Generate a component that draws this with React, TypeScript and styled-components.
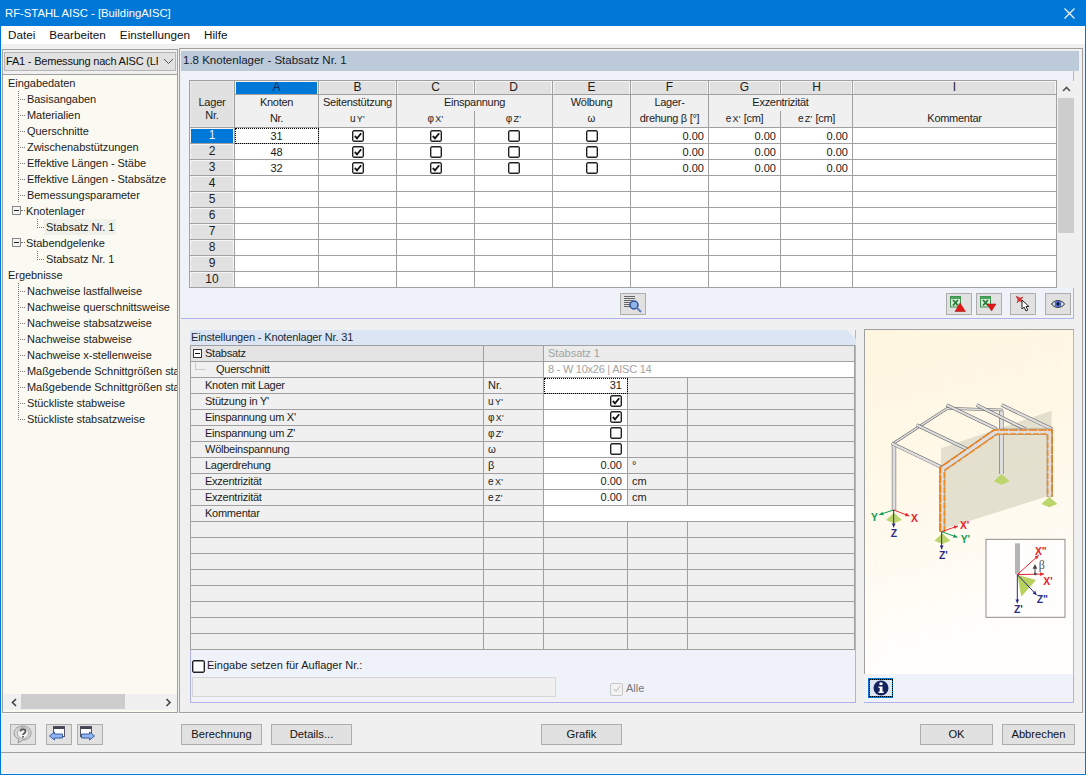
import React from "react";
import styled, { createGlobalStyle } from "styled-components";

const Global = createGlobalStyle`
  html, body { margin: 0; padding: 0; background: #f0f0f0; overflow: hidden; }
  * { box-sizing: border-box; }
`;

const LINE = "#a0a0a0";
const PURPLE = "#b0b0ea";
const PANEL = "#eff3f9";

const Win = styled.div`
  width: 1086px; height: 775px; display: flex; flex-direction: column;
  border: 1px solid #0078d7; border-top: 0; background: #f0f0f0;
  font: 11px/15px "Liberation Sans", Arial, sans-serif; color: #1c1c1c; overflow: hidden;
`;
const TitleBar = styled.div`
  height: 26px; flex: none; background: #0078d7; color: #fff; display: flex; align-items: center;
  justify-content: space-between; padding: 0 10px 0 4px; font-size: 11.3px;
`;
const MenuBar = styled.div`
  height: 18px; flex: none; background: #fff; display: flex; gap: 14px; padding-left: 7px;
  font-size: 11.7px; line-height: 18px; color: #111;
`;
const Workspace = styled.div`
  height: 665px; flex: none; margin-top: 4px; display: flex; align-items: flex-start; padding-left: 1px;
`;
const Sidebar = styled.aside`
  width: 176px; height: 664px; margin-top: 1px; border: 1px solid ${LINE}; display: flex; flex-direction: column;
  padding-top: 2px; overflow: hidden;
`;
const Combo = styled.div`
  height: 19px; margin: 0 0 0 1px; width: 172px; flex: none; background: #e1e1e1; border: 1px solid #b4b4b4;
  display: flex; align-items: center; padding-left: 1px; font-size: 11px; color: #111; letter-spacing: -.2px;
`;
const ComboText = styled.span`width: 152px; overflow: hidden; white-space: nowrap; flex: none;`;
const ComboArrow = styled.span`display: flex; margin-left: 5px;`;
const Tree = styled.div`
  flex: 1; margin-top: 3px; border-top: 1px solid ${LINE}; background: #fbfaf2; display: flex; flex-direction: column;
  min-height: 0;
`;
const TreeBody = styled.div`flex: 1; overflow: hidden; padding-top: 0; letter-spacing: -.05px;`;
const TreeRow = styled.div<{ $top?: boolean }>`
  height: 16px; display: flex; align-items: stretch; white-space: nowrap; padding-left: ${p => (p.$top ? 5 : 0)}px;
  line-height: 16px;
`;
const Connector = styled.span<{ $left: number; $width: number; $last?: boolean; $noVert?: boolean }>`
  position: relative; flex: none; margin-left: ${p => p.$left}px; width: ${p => p.$width}px;
  &::before {
    content: ""; position: absolute; left: 0; top: 0; width: 1px; height: ${p => (p.$noVert ? 0 : p.$last ? "50%" : "100%")};
    background: repeating-linear-gradient(180deg, #777 0 1px, transparent 1px 2px);
  }
  &::after {
    content: ""; position: absolute; left: 0; top: 8px; right: 1px; height: 1px;
    background: repeating-linear-gradient(90deg, #777 0 1px, transparent 1px 2px);
  }
`;
const Expander = styled.span`
  flex: none; width: 9px; height: 9px; margin: 3px 0 0 9px; border: 1px solid #888; background: #f4f4f4;
  display: flex; align-items: center; justify-content: center;
  &::after { content: ""; width: 5px; height: 1px; background: #222; }
`;
const ExpanderTail = styled.span`
  flex: none; width: 4px; height: 8px; border-bottom: 1px dotted #777; margin-right: 1px;
`;
const TreeLabel = styled.span<{ $selected?: boolean }>`
  flex: none; background: ${p => (p.$selected ? "#f1f1ec" : "transparent")};
  padding: 0 ${p => (p.$selected ? 2 : 0)}px; margin-left: ${p => (p.$selected ? -2 : 0)}px;
`;
const HScroll = styled.div`
  height: 16px; flex: none; background: #f0f0f0; margin: 0 0 2px 0; display: flex; align-items: center; justify-content: space-between; padding: 0 4px 0 7px; position: relative;
`;
const HThumb = styled.span`
  position: absolute; left: 18px; top: 0; width: 104px; height: 15px; background: #cdcdcd;
`;
const Main = styled.main`
  width: 904px; height: 665px; margin-left: 1px; border: 1px solid ${LINE}; padding: 2px 0 0 1px; overflow: hidden;
`;
const SectionTitle = styled.div`
  width: 898px; height: 20px; background: #bccad9; font-size: 11.5px; line-height: 19px; padding-left: 2px; color: #14202c;
`;
const UpperPanel = styled.section`
  width: 893px; height: 248px; background: ${PANEL}; border-right: 1px solid ${PURPLE}; border-bottom: 1px solid ${PURPLE};
  padding: 9px 0 0 8px;
`;
const TableWrap = styled.div`display: flex; height: 208px;`;
const Table = styled.table`
  width: 868px; table-layout: fixed; border-collapse: separate; border-spacing: 0; background: #fff;
  border-top: 1px solid ${LINE}; border-left: 1px solid ${LINE}; font: inherit; flex: none; height: 208px;
`;
const Corner = styled.th`
  background: #e1e1e1; border-right: 1px solid ${LINE}; border-bottom: 1px solid ${LINE}; font-weight: 400; padding: 10px 0 0; line-height: 13px;
  letter-spacing: -.2px; box-shadow: inset 0 0 0 1px #e9e9e9;
`;
const LetterCell = styled.th<{ $active?: boolean }>`
  height: 14px; padding: 0; font-weight: 400; font-size: 12px; line-height: 13px; text-align: center;
  background: ${p => (p.$active ? "#0078d7" : "#e1e1e1")}; color: ${p => (p.$active ? "#06305c" : "#1c1c1c")};
  border-right: 1px solid ${LINE}; border-bottom: 1px solid ${LINE};
  box-shadow: inset 1px 1px 0 #f4f4f4, inset -1px 0 0 #f4f4f4;
`;
const HeadCell = styled.th<{ $h: number; $line?: boolean; $big?: boolean }>`
  height: ${p => p.$h}px; padding: 0 0 1px; font-weight: 400; background: #f0f0f0; text-align: center; line-height: 15px; letter-spacing: -.28px;
  border-right: 1px solid ${LINE}; border-bottom: ${p => (p.$line ? `1px solid ${LINE}` : "0")}; white-space: nowrap;
`;
const RowHead = styled.th<{ $active?: boolean }>`
  height: 16px; padding: 0; font-weight: 400; font-size: 12px; line-height: 13px; text-align: center;
  background: ${p => (p.$active ? "#0078d7" : "#e1e1e1")}; color: ${p => (p.$active ? "#e6f0fa" : "#1c1c1c")};
  border-right: 1px solid ${LINE}; border-bottom: 1px solid ${LINE};
  box-shadow: inset 1px 1px 0 #f6f6f6, inset -1px 0 0 #f6f6f6;
`;
const Cell = styled.td<{ $align?: string; $focus?: boolean }>`
  height: 16px; padding: 1px ${p => (p.$align === "right" ? 4 : 0)}px 0 0; text-align: ${p => p.$align || "center"};
  border-right: 1px solid ${LINE}; border-bottom: 1px solid ${LINE}; background: #fff; line-height: 14px; color: #1a1a1a;
  ${p => (p.$focus ? "outline: 1px dotted #000; outline-offset: -1px;" : "")}
`;
const Box = styled.span<{ $disabled?: boolean; $size: number }>`
  display: inline-flex; width: ${p => p.$size}px; height: ${p => p.$size}px; align-items: center; justify-content: center; vertical-align: top; margin-top: 1px;
  border: 1px solid ${p => (p.$disabled ? "#c8c8c8" : "#222")}; border-radius: 2px; background: ${p => (p.$disabled ? "#f2f2f2" : "#fff")}; flex: none;
  box-shadow: ${p => (p.$disabled ? "none" : "inset 0 0 0 .4px #222")};
`;
const Sub = styled.span`font-size: 9px; margin-left: 1px; line-height: 1;`;
const Sym = styled.span`font-size: 10px; letter-spacing: .3px; line-height: 1;`;
const VScroll = styled.div`
  width: 17px; flex: none; margin-top: 1px; background: #f0f0f0; display: flex; flex-direction: column; align-items: center; padding-left: 1px;
`;
const VArrow = styled.div`height: 17px; flex: none; display: flex; align-items: center; justify-content: center;`;
const VTrack = styled.div`flex: 1; width: 100%; padding-bottom: 54px;`;
const VThumb = styled.div`width: 100%; height: 135px; background: #cdcdcd;`;
const Toolbar = styled.div`display: flex; margin-top: 5px; padding: 0 2px 0 431px;`;
const ToolButton = styled.button<{ $ml?: number; $auto?: boolean }>`
  width: 26px; height: 22px; padding: 0; background: #e1e1e1; border: 1px solid #adadad; display: flex; align-items: center; justify-content: center;
  margin-left: ${p => (p.$auto ? "auto" : `${p.$ml ?? 0}px`)}; flex: none;
`;
const Lower = styled.div`display: flex; align-items: flex-start; margin-top: 11px; padding-left: 9px;`;
const SettingsPanel = styled.section`width: 666px; height: 373px; border-right: 1px solid ${PURPLE}; border-bottom: 1px solid ${PURPLE}; display: flex; flex-direction: column;`;
const SettingsTitle = styled.div`
  height: 15px; flex: none; background: #dbe5f3; line-height: 14px; padding-left: 1px; color: #1c2833; margin-right: -1px; letter-spacing: -.16px;
  clip-path: polygon(0 0, calc(100% - 9px) 0, 100% 9px, 100% 100%, 0 100%);
`;
const PropTable = styled.table`
  width: 665px; table-layout: fixed; border-collapse: separate; border-spacing: 0; border-top: 1px solid ${LINE}; border-left: 1px solid ${LINE};
  font: inherit; flex: none; background: #f0f0f0;
`;
const PropCell = styled.td<{ $bg?: string; $align?: string; $gray?: boolean; $focus?: boolean; $pad?: number; $tight?: boolean }>`
  height: 16px; padding: 0 ${p => (p.$align === "right" ? 5 : 2)}px 0 ${p => p.$pad ?? 4}px; line-height: 15px; white-space: nowrap; overflow: hidden;
  background: ${p => p.$bg || "#f0f0f0"}; text-align: ${p => p.$align || "left"}; color: ${p => (p.$gray ? "#a3a3a3" : "#1c1c1c")};
  border-right: 1px solid ${LINE}; border-bottom: 1px solid ${LINE}; letter-spacing: ${p => (p.$tight ? "-.25px" : "0")};
  ${p => (p.$focus ? "outline: 1px dotted #000; outline-offset: -1px;" : "")}
`;
const LabelCollapse = styled.span`
  display: inline-block; width: 9px; height: 9px; border: 1px solid #333; background: #fff; position: relative; top: 0; margin-right: 3px; vertical-align: -1px;
  &::after { content: ""; position: absolute; left: 1px; top: 3px; width: 5px; height: 1px; background: #111; }
`;
const Elbow = styled.span`
  display: inline-block; width: 11px; height: 8px; margin: 0 10px 0 4px; border-left: 1px solid #ccc; border-bottom: 1px solid #ccc; vertical-align: 3px;
`;
const SettingsFooter = styled.div`
  flex: 1; background: ${PANEL}; border-left: 1px solid ${PURPLE}; padding: 9px 0 0 1px; display: flex; flex-direction: column;
`;
const CheckLine = styled.label`display: flex; align-items: center; gap: 2px; height: 13px; color: #1a1a1a;`;
const InputLine = styled.div`display: flex; align-items: center; margin-top: 5px;`;
const DisabledInput = styled.div`width: 364px; height: 20px; background: #f0f0f0; border: 1px solid #d4d4d4;`;
const AllLabel = styled.label`display: flex; align-items: center; gap: 3px; margin-left: 54px; color: #777; padding-top: 3px;`;
const PicturePanel = styled.section`width: 210px; height: 374px; margin: -1px 0 0 8px; display: flex; flex-direction: column;`;
const Picture = styled.div`
  height: 345px; flex: none; border-top: 1px solid ${LINE}; border-left: 1px solid ${LINE}; border-right: 1px solid ${PURPLE}; overflow: hidden;
  background: linear-gradient(165deg, #fff6e0 0%, #fff9ea 45%, #fffefc 85%);
  svg { display: block; }
`;
const InfoBar = styled.div`
  flex: 1; background: ${PANEL}; border-right: 1px solid ${PURPLE}; border-bottom: 1px solid ${PURPLE}; padding: 4px 0 0 4px;
`;
const InfoButton = styled.button`
  width: 25px; height: 20px; padding: 0; background: #0078d7; border: 0; display: flex; align-items: center; justify-content: center;
  span { display: flex; outline: 1px dotted #000; background: #dde6f2; padding: 0 3px; }
`;
const ButtonBar = styled.footer`
  height: 40px; flex: none; margin-top: 0; border-top: 1px solid #f8f8f8; border-bottom: 1px solid ${LINE}; padding: 10px 9px 0 0; display: flex; align-items: flex-start;
`;
const Btn = styled.button<{ $ml: number; $w: number }>`
  width: ${p => p.$w}px; height: 21px; margin-left: ${p => p.$ml}px; padding: 0; background: #e1e1e1; border: 1px solid #adadad;
  font: inherit; font-size: 11.2px; color: #111; flex: none;
`;
const IconBtn = styled(Btn)`display: flex; align-items: center; justify-content: center;`;
const StatusBar = styled.div`flex: 1; background: #f0f0f0; border-bottom: 1px solid #fafafa;`;

const Chev: React.FC<{ d: "up" | "down" | "left" | "right"; c?: string }> = ({ d, c = "#555" }) => {
  const p = { up: "1,6 4.5,2.5 8,6", down: "1,2.5 4.5,6 8,2.5", left: "6,1 2.5,4.5 6,8", right: "2.5,1 6,4.5 2.5,8" }[d];
  return <svg width="9" height="9" viewBox="0 0 9 9"><polyline points={p} fill="none" stroke={c} strokeWidth="1.6" /></svg>;
};
const Check: React.FC<{ on?: boolean; disabled?: boolean; size?: number }> = ({ on, disabled, size = 12 }) => (
  <Box $disabled={disabled} $size={size}>
    {on && (
      <svg width="10" height="10" viewBox="0 0 11 11">
        <polyline points="2,5.5 4.4,8 9,2.5" fill="none" stroke={disabled ? "#b0b0b0" : "#111"} strokeWidth={disabled ? 1 : 2} />
      </svg>
    )}
  </Box>
);

const ExcelIcon: React.FC<{ down?: boolean }> = ({ down }) => (
  <svg width="22" height="18" viewBox="0 0 22 18">
    <rect x="2.500" y="1.500" width="10" height="10.500" fill="#d4ead4" stroke="#3f9350" />
    <rect x="3" y="2" width="9" height="2" fill="#4aa45a" />
    <path d="M5 5l5 5.500M10 5l-5 5.500" stroke="#2a7a3a" strokeWidth="1.800" />
    {down
      ? <polygon points="9,9 18,9 13.500,16" fill="#e01818" stroke="#a01010" strokeWidth=".5" />
      : <polygon points="12,8 17.500,16.500 7,16.500" fill="#e01818" stroke="#a01010" strokeWidth=".5" />}
  </svg>
);
const SearchListIcon = () => (
  <svg width="20" height="18" viewBox="0 0 20 18">
    <path d="M1 1.500h11M1 3.500h11M1 5.500h9M1 7.500h7M1 9.500h7M1 11.500h8" stroke="#666" />
    <circle cx="11" cy="10" r="4" fill="#8eb4e8" stroke="#2f4f9a" strokeWidth="1.500" />
    <path d="M14 13l4 4" stroke="#5e7fc0" strokeWidth="2.200" />
  </svg>
);
const PinIcon = () => (
  <svg width="20" height="20" viewBox="0 0 20 20">
    <path d="M3 2l4 2 3-1-2 3 1 2-3-1-2 2 1-3z" fill="#d83a3a" stroke="#b02828" strokeWidth=".5" />
    <path d="M9 6v9l2.200-1.800 1.800 3.800 1.800-1-1.800-3.500h3z" fill="#fff" stroke="#222" />
  </svg>
);
const EyeIcon = () => (
  <svg width="14" height="10" viewBox="0 0 14 10">
    <path d="M.5 5c3-4.500 10-4.500 13 0-3 4.500-10 4.500-13 0z" fill="#dfe6f5" stroke="#222" />
    <circle cx="7" cy="5" r="3.300" fill="#4a68c8" />
    <circle cx="7" cy="5" r="1.400" fill="#111" />
  </svg>
);
const HelpIcon = () => (
  <svg width="20" height="19" viewBox="0 0 20 19">
    <path d="M10 1c5 0 8 3 8 7s-3 7-8 7l-5 3 1-4c-3-1-5-3-5-6 0-4 4-7 9-7z" fill="#d6d6d6" stroke="#999" />
    <circle cx="10" cy="8" r="5.500" fill="#f4f4f4" stroke="#aaa" />
    <path d="M7.500 6.500c0-3 5-3 5 0 0 2-2.500 2-2.500 3.500M10 11v1.600" fill="none" stroke="#5a5a5a" strokeWidth="1.800" />
  </svg>
);
const NavIcon: React.FC<{ next?: boolean }> = ({ next }) => (
  <svg width="22" height="19" viewBox="0 0 22 19">
    <rect x={next ? 1.5 : 5.5} y="1.500" width="11" height="10" fill="#fff" stroke="#556" />
    <rect x={next ? 1.5 : 5.5} y="1.500" width="11" height="2.500" fill="#445" />
    <polygon
      points={next ? "15.500,11 10.500,7 10.500,9 2.500,9 2.500,13 10.500,13 10.500,15" : "1.500,11 6.500,7 6.500,9 14.500,9 14.500,13 6.500,13 6.500,15"}
      fill="#8fb4f0" stroke="#2b4fa0" strokeWidth=".9"
    />
  </svg>
);
const InfoIcon = () => (
  <svg width="16" height="16" viewBox="0 0 16 16">
    <circle cx="8" cy="8" r="7.500" fill="#14235e" />
    <rect x="6.500" y="2.500" width="3" height="2.500" fill="#fff" />
    <path d="M5.500 6.500h4V11.500h1.200v1.500H5.500v-1.500h1.200V8H5.500z" fill="#fff" />
  </svg>
);

const Beam: React.FC<{ d: string; w?: number }> = ({ d, w = 10 }) => (
  <g fill="none">
    <path d={d} stroke="#5c5c5c" strokeWidth={w} />
    <path d={d} stroke="#dedede" strokeWidth={w - 3} />
  </g>
);
const Support: React.FC<{ x: number; y: number }> = ({ x, y }) => (
  <polygon points={`${x},${y} ${x + 24},${y + 22} ${x},${y + 32} ${x - 24},${y + 22}`} fill="#bcd56c" />
);
const Arrow: React.FC<{ x1: number; y1: number; x2: number; y2: number; c: string }> = ({ x1, y1, x2, y2, c }) => {
  const a = Math.atan2(y2 - y1, x2 - x1);
  const s = 13, t = 0.45;
  const p1 = `${x2 - s * Math.cos(a - t)},${y2 - s * Math.sin(a - t)}`;
  const p2 = `${x2 - s * Math.cos(a + t)},${y2 - s * Math.sin(a + t)}`;
  return (
    <g>
      <line x1={x1} y1={y1} x2={x2} y2={y2} stroke={c} strokeWidth="3" />
      <polygon points={`${x2},${y2} ${p1} ${p2}`} fill={c} />
    </g>
  );
};
const AxisLabel = styled.text<{ $c: string }>`
  font: 700 31px "Liberation Sans", Arial, sans-serif; fill: ${p => p.$c};
`;
const RED = "#e8202a", GREEN = "#0e9a50", NAVY = "#2b2a86";

const FrameDrawing = () => (
  <svg width="208" height="344" viewBox="0 0 208 344">
    <g transform="translate(-5 50) scale(.3333)">
      <polygon points="243,205 575,92 575,345 243,450" fill="#d9d6c4" opacity=".72" />
      <Support x={425} y={282} />
      <Support x={568} y={350} />
      <Support x={102} y={398} />
      <Support x={247} y={460} />
      <Beam d="M424 92V282" w={13} />
      <Beam d="M102 192V392" w={13} />
      <Beam d="M100 190L262 85L428 90" w={8} />
      <Beam d="M95 190L245 262" />
      <Beam d="M170 135L320 207" />
      <Beam d="M260 75L410 147" />
      <Beam d="M350 75L497 148" />
      <Beam d="M425 75L578 148" />
      <Beam d="M247 455V266L407 155H569V350" w={17} />
      <path d="M241 455V262L402 150H576V350" fill="none" stroke="#ee7d11" strokeWidth="5" strokeDasharray="26 3" />
      <path d="M253 455V272L412 162H563V350" fill="none" stroke="#f08a22" strokeWidth="5" strokeDasharray="18 5" />
      <Arrow x1={101} y1={390} x2={148} y2={408} c={RED} />
      <Arrow x1={101} y1={390} x2={58} y2={404} c={GREEN} />
      <Arrow x1={101} y1={390} x2={101} y2={442} c={NAVY} />
      <AxisLabel $c={RED} x="153" y="426">X</AxisLabel>
      <AxisLabel $c={GREEN} x="33" y="422">Y</AxisLabel>
      <AxisLabel $c={NAVY} x="92" y="472">Z</AxisLabel>
      <Arrow x1={245} y1={455} x2={294} y2={438} c={RED} />
      <Arrow x1={245} y1={455} x2={292} y2={472} c={GREEN} />
      <Arrow x1={245} y1={455} x2={245} y2={508} c={NAVY} />
      <AxisLabel $c={RED} x="300" y="446">X'</AxisLabel>
      <AxisLabel $c={GREEN} x="302" y="489">Y'</AxisLabel>
      <AxisLabel $c={NAVY} x="237" y="537">Z'</AxisLabel>
      <rect x="378" y="478" width="237" height="234" fill="#fffefc" stroke="#8c8c8c" strokeWidth="3" />
      <rect x="465" y="490" width="15" height="92" fill="#b4b4b4" />
      <polygon points="472,584 528,600 484,650" fill="#b8d25e" />
      <Arrow x1={472} y1={584} x2={472} y2={670} c={NAVY} />
      <Arrow x1={472} y1={584} x2={552} y2={582} c={RED} />
      <Arrow x1={472} y1={584} x2={536} y2={526} c={RED} />
      <Arrow x1={472} y1={584} x2={530} y2={645} c={NAVY} />
      <path d="M525 582V560" stroke="#444" strokeWidth="3" />
      <polygon points="525,552 518,566 532,566" fill="#444" />
      <circle cx="526" cy="582" r="4" fill="#444" />
      <AxisLabel $c={RED} x="525" y="524">X"</AxisLabel>
      <AxisLabel $c={RED} x="550" y="616">X'</AxisLabel>
      <AxisLabel $c={NAVY} x="530" y="668">Z"</AxisLabel>
      <AxisLabel $c={NAVY} x="462" y="698">Z'</AxisLabel>
      <text x="536" y="566" fontFamily="Liberation Serif, serif" fontSize="36" fill="#555">β</text>
    </g>
  </svg>
);

type TreeItem = { t: string; kind: "top" | "item" | "sub" | "expand"; last?: boolean; sel?: boolean; vert?: boolean };
const tree: TreeItem[] = [
  { t: "Eingabedaten", kind: "top" },
  { t: "Basisangaben", kind: "item" }, { t: "Materialien", kind: "item" }, { t: "Querschnitte", kind: "item" },
  { t: "Zwischenabstützungen", kind: "item" }, { t: "Effektive Längen - Stäbe", kind: "item" },
  { t: "Effektive Längen - Stabsätze", kind: "item" }, { t: "Bemessungsparameter", kind: "item" },
  { t: "Knotenlager", kind: "expand" }, { t: "Stabsatz Nr. 1", kind: "sub", sel: true },
  { t: "Stabendgelenke", kind: "expand" }, { t: "Stabsatz Nr. 1", kind: "sub" },
  { t: "Ergebnisse", kind: "top" },
  { t: "Nachweise lastfallweise", kind: "item" }, { t: "Nachweise querschnittsweise", kind: "item" },
  { t: "Nachweise stabsatzweise", kind: "item" }, { t: "Nachweise stabweise", kind: "item" },
  { t: "Nachweise x-stellenweise", kind: "item" }, { t: "Maßgebende Schnittgrößen stabsatzweise", kind: "item" },
  { t: "Maßgebende Schnittgrößen stabweise", kind: "item" }, { t: "Stückliste stabweise", kind: "item" },
  { t: "Stückliste stabsatzweise", kind: "item", last: true },
];

const widths = [45, 84, 78, 78, 78, 78, 78, 72, 72, 203];
const letters = ["A", "B", "C", "D", "E", "F", "G", "H", "I"];
const dataRows = [
  { n: 31, c: [true, true, false, false] },
  { n: 48, c: [true, false, false, false] },
  { n: 32, c: [true, true, false, false] },
];
const propWidths = [293, 60, 84, 60, 167];

type Prop = { label: string; sym?: React.ReactNode; check?: boolean; val?: string; unit?: string };
const props: Prop[] = [
  { label: "Stützung in Y'", sym: <Sym>u<Sub>Y'</Sub></Sym>, check: true },
  { label: "Einspannung um X'", sym: <Sym>φ<Sub>X'</Sub></Sym>, check: true },
  { label: "Einspannung um Z'", sym: <Sym>φ<Sub>Z'</Sub></Sym>, check: false },
  { label: "Wölbeinspannung", sym: <Sym>ω</Sym>, check: false },
  { label: "Lagerdrehung", sym: "β", val: "0.00", unit: "°" },
  { label: "Exzentrizität", sym: <Sym>e<Sub>X'</Sub></Sym>, val: "0.00", unit: "cm" },
  { label: "Exzentrizität", sym: <Sym>e<Sub>Z'</Sub></Sym>, val: "0.00", unit: "cm" },
];

export default function App() {
  return (
    <Win>
      <Global />
      <TitleBar>
        <span>RF-STAHL AISC - [BuildingAISC]</span>
        <svg width="11" height="11" viewBox="0 0 11 11"><path d="M.5.500l10 10M10.500.500l-10 10" stroke="#fff" strokeWidth="1.100" /></svg>
      </TitleBar>
      <MenuBar>
        <span>Datei</span><span>Bearbeiten</span><span>Einstellungen</span><span>Hilfe</span>
      </MenuBar>
      <Workspace>
        <Sidebar>
          <Combo>
            <ComboText>FA1 - Bemessung nach AISC (LRFD)</ComboText>
            <ComboArrow><svg width="11" height="7" viewBox="0 0 11 7"><polyline points="1,1 5.500,5.500 10,1" fill="none" stroke="#555" /></svg></ComboArrow>
          </Combo>
          <Tree>
            <TreeBody>
              {tree.map((it, i) => (
                <TreeRow key={i} $top={it.kind === "top"}>
                  {it.kind === "item" && <Connector $left={15} $width={9} $last={it.last} />}
                  {it.kind === "expand" && <><Expander /><ExpanderTail /></>}
                  {it.kind === "sub" && <Connector $left={34} $width={9} $last />}
                  <TreeLabel $selected={it.sel}>{it.t}</TreeLabel>
                </TreeRow>
              ))}
            </TreeBody>
            <HScroll>
              <Chev d="left" c="#444" />
              <HThumb />
              <Chev d="right" c="#444" />
            </HScroll>
          </Tree>
        </Sidebar>
        <Main>
          <SectionTitle>1.8 Knotenlager - Stabsatz Nr. 1</SectionTitle>
          <UpperPanel>
            <TableWrap>
              <Table>
                <colgroup>
                  {widths.map((w, i) => <col key={i} style={{ width: i === 9 ? w + 1 : w }} />)}
                </colgroup>
                <thead>
                  <tr>
                    <Corner rowSpan={3}>Lager<br />Nr.</Corner>
                    {letters.map((l, i) => <LetterCell key={l} $active={i === 0}>{l}</LetterCell>)}
                  </tr>
                  <tr>
                    <HeadCell $h={16}>Knoten</HeadCell>
                    <HeadCell $h={16}>Seitenstützung</HeadCell>
                    <HeadCell $h={16} colSpan={2}>Einspannung</HeadCell>
                    <HeadCell $h={16}>Wölbung</HeadCell>
                    <HeadCell $h={16}>Lager-</HeadCell>
                    <HeadCell $h={16} colSpan={2}>Exzentrizität</HeadCell>
                    <HeadCell $h={16} />
                  </tr>
                  <tr>
                    <HeadCell $h={17} $line>Nr.</HeadCell>
                    <HeadCell $h={17} $line><Sym>u<Sub>Y'</Sub></Sym></HeadCell>
                    <HeadCell $h={17} $line><Sym>φ<Sub>X'</Sub></Sym></HeadCell>
                    <HeadCell $h={17} $line><Sym>φ<Sub>Z'</Sub></Sym></HeadCell>
                    <HeadCell $h={17} $line><Sym>ω</Sym></HeadCell>
                    <HeadCell $h={17} $line>drehung β [°]</HeadCell>
                    <HeadCell $h={17} $line><Sym>e<Sub>X'</Sub></Sym> [cm]</HeadCell>
                    <HeadCell $h={17} $line><Sym>e<Sub>Z'</Sub></Sym> [cm]</HeadCell>
                    <HeadCell $h={17} $line>Kommentar</HeadCell>
                  </tr>
                </thead>
                <tbody>
                  {Array.from({ length: 10 }, (_, r) => {
                    const d = dataRows[r];
                    return (
                      <tr key={r}>
                        <RowHead $active={r === 0}>{r + 1}</RowHead>
                        <Cell $focus={r === 0}>{d?.n}</Cell>
                        {d
                          ? d.c.map((on, i) => <Cell key={i}><Check on={on} /></Cell>)
                          : [0, 1, 2, 3].map(i => <Cell key={i} />)}
                        {[0, 1, 2].map(i => <Cell key={i} $align="right">{d ? "0.00" : ""}</Cell>)}
                        <Cell />
                      </tr>
                    );
                  })}
                </tbody>
              </Table>
              <VScroll>
                <VArrow><Chev d="up" /></VArrow>
                <VTrack><VThumb /></VTrack>
                <VArrow><Chev d="down" /></VArrow>
              </VScroll>
            </TableWrap>
            <Toolbar>
              <ToolButton><SearchListIcon /></ToolButton>
              <ToolButton $auto><ExcelIcon /></ToolButton>
              <ToolButton $ml={4}><ExcelIcon down /></ToolButton>
              <ToolButton $ml={8}><PinIcon /></ToolButton>
              <ToolButton $ml={9}><EyeIcon /></ToolButton>
            </Toolbar>
          </UpperPanel>
          <Lower>
            <SettingsPanel>
              <SettingsTitle>Einstellungen - Knotenlager Nr. 31</SettingsTitle>
              <PropTable>
                <colgroup>{propWidths.map((w, i) => <col key={i} style={{ width: w }} />)}</colgroup>
                <tbody>
                  <tr>
                    <PropCell $bg="#e4e4e4" $pad={2} $tight><LabelCollapse />Stabsatz</PropCell>
                    <PropCell $bg="#e4e4e4" />
                    <PropCell $bg="#ececec" colSpan={3} $gray>Stabsatz 1</PropCell>
                  </tr>
                  <tr>
                    <PropCell $pad={0} $tight><Elbow />Querschnitt</PropCell>
                    <PropCell />
                    <PropCell $bg="#fff" colSpan={3} $gray $tight>8 - W 10x26 | AISC 14</PropCell>
                  </tr>
                  <tr>
                    <PropCell $pad={14} $tight>Knoten mit Lager</PropCell>
                    <PropCell>Nr.</PropCell>
                    <PropCell $bg="#fff" $align="right" $focus>31</PropCell>
                    <PropCell /><PropCell />
                  </tr>
                  {props.map((p, i) => (
                    <tr key={i}>
                      <PropCell $pad={14} $tight>{p.label}</PropCell>
                      <PropCell>{p.sym}</PropCell>
                      <PropCell $bg="#fff" $align="right">
                        {p.val ?? <Check on={p.check} />}
                      </PropCell>
                      <PropCell>{p.unit}</PropCell>
                      <PropCell />
                    </tr>
                  ))}
                  <tr>
                    <PropCell $pad={14} $tight>Kommentar</PropCell>
                    <PropCell />
                    <PropCell $bg="#fff" colSpan={3} />
                  </tr>
                  {Array.from({ length: 8 }, (_, r) => (
                    <tr key={r}>{propWidths.map((_, c) => <PropCell key={c} />)}</tr>
                  ))}
                </tbody>
              </PropTable>
              <SettingsFooter>
                <CheckLine><Check size={13} /> Eingabe setzen für Auflager Nr.:</CheckLine>
                <InputLine>
                  <DisabledInput />
                  <AllLabel><Check on disabled size={13} /> Alle</AllLabel>
                </InputLine>
              </SettingsFooter>
            </SettingsPanel>
            <PicturePanel>
              <Picture><FrameDrawing /></Picture>
              <InfoBar>
                <InfoButton><span><InfoIcon /></span></InfoButton>
              </InfoBar>
            </PicturePanel>
          </Lower>
        </Main>
      </Workspace>
      <ButtonBar>
        <IconBtn $ml={9} $w={26}><HelpIcon /></IconBtn>
        <IconBtn $ml={10} $w={26}><NavIcon /></IconBtn>
        <IconBtn $ml={5} $w={26}><NavIcon next /></IconBtn>
        <Btn $ml={78} $w={81}>Berechnung</Btn>
        <Btn $ml={9} $w={81}>Details...</Btn>
        <Btn $ml={189} $w={81}>Grafik</Btn>
        <Btn $ml={298} $w={73}>OK</Btn>
        <Btn $ml={9} $w={73}>Abbrechen</Btn>
      </ButtonBar>
      <StatusBar />
    </Win>
  );
}
